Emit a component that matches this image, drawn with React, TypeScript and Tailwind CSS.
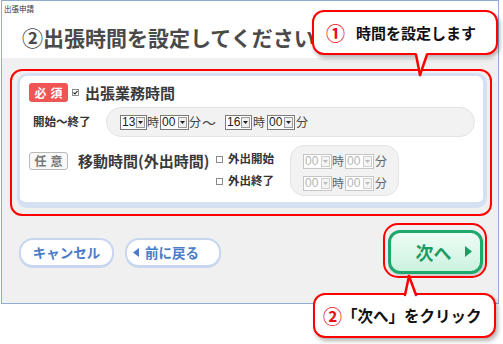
import React from "react";

function Arrow({ dim }: { dim?: boolean }) {
  return (
    <span
      className={`ml-auto mr-[1px] flex h-[11px] w-[9px] items-center justify-center border ${
        dim ? "border-[#cfcfcf] bg-[#f4f4f4]" : "border-[#9a9a9a] bg-[#eeeeee]"
      }`}
    >
      <svg width="5" height="3" viewBox="0 0 5 3">
        <polygon points="0,0 5,0 2.5,3" fill={dim ? "#bbbbbb" : "#222222"} />
      </svg>
    </span>
  );
}

function Sel({ v, cls, dim }: { v: string; cls: string; dim?: boolean }) {
  return (
    <span
      className={`flex h-[15px] items-center border bg-white ${cls} ${
        dim ? "border-[#c6c6c6] text-[#b4b4b4]" : "border-[#7a7a7a] text-[#222]"
      }`}
    >
      <span className="pl-[1px] text-[12px] leading-none font-['Liberation_Sans',sans-serif]">{v}</span>
      <Arrow dim={dim} />
    </span>
  );
}

function Check({ checked }: { checked?: boolean }) {
  return (
    <span className="flex h-[7px] w-[7px] items-center justify-center border border-[#8a8a8a] bg-white">
      {checked && (
        <svg width="5" height="5" viewBox="0 0 5 5">
          <polyline points="0.5,2.5 2,4 4.5,0.8" fill="none" stroke="#222" strokeWidth="1.1" />
        </svg>
      )}
    </span>
  );
}

export default function App() {
  return (
    <div className="relative h-[344px] w-[503px] overflow-hidden bg-white font-['Noto_Sans_CJK_JP',sans-serif]">
      <div className="ml-[1px] flex h-[304px] w-[498px] flex-col border border-[#8fadd0]">
        <div className="h-[17px] pl-[2px] pt-[4px] text-[7.5px] leading-none text-[#333]">出張申請</div>
        <div className="flex h-[40px] items-center whitespace-nowrap pb-[2px] pl-[20px] text-[21px] font-bold leading-none text-[#4a4a4a]">
          ②出張時間を設定してください
        </div>
        <div className="flex-1 bg-[#f0f0f0] pt-[11px]">
          {/* red annotation around panel */}
          <div className="ml-[8px] h-[147px] w-[482px] rounded-[12px] border-2 border-[#ff0000]">
            <div className="ml-[5px] mt-[2px] h-[135px] w-[470px] rounded-[10px] border-[3px] border-b-[6px] border-r-[4px] border-[#d5e0f2] bg-white pl-[9px] pt-[7px]">
              {/* row 1 */}
              <div className="flex h-[19px] items-center">
                <span className="flex h-[19px] w-[39px] items-center justify-center gap-[4px] rounded-[3px] bg-[#f05555] text-[12px] font-bold leading-none text-white">
                  <span>必</span>
                  <span>須</span>
                </span>
                <span className="ml-[4px]">
                  <Check checked />
                </span>
                <span className="ml-[6px] text-[15px] font-bold leading-none text-[#3a3a3a]">出張業務時間</span>
              </div>
              {/* row 2 */}
              <div className="mt-[5px] flex h-[30px] items-center">
                <span className="w-[77px] pl-[4px] text-[11.5px] font-bold leading-none text-[#333]">開始～終了</span>
                <div className="flex h-[30px] w-[369px] items-center rounded-[15px] border border-[#e4e4e4] bg-[#f2f2f2] pl-[13px] text-[12px] leading-none text-[#444]">
                  <Sel v="13" cls="w-[27px]" />
                  <span className="ml-[0px]">時</span>
                  <Sel v="00" cls="ml-[1px] w-[29px]" />
                  <span>分</span>
                  <span className="ml-[1px] text-[14px]">～</span>
                  <Sel v="16" cls="ml-[9px] w-[27px]" />
                  <span className="ml-[1px]">時</span>
                  <Sel v="00" cls="ml-[2px] w-[28px]" />
                  <span className="ml-[1px]">分</span>
                </div>
              </div>
              {/* row 3 */}
              <div className="mt-[8px] flex items-start">
                <div className="flex w-[187px] items-center pt-[7px]">
                  <span className="flex h-[18px] w-[39px] items-center justify-center gap-[4px] rounded-[3px] border border-[#b9b9b9] bg-[#f8f8f8] text-[12px] font-bold leading-none text-[#777]">
                    <span>任</span>
                    <span>意</span>
                  </span>
                  <span className="ml-[10px] text-[15px] font-bold leading-[18px] text-[#3a3a3a]">移動時間(外出時間)</span>
                </div>
                <div className="w-[74px] pt-[3px]">
                  <div className="flex h-[22px] items-center gap-[5px]">
                    <Check />
                    <span className="text-[11.5px] font-bold leading-none text-[#333]">外出開始</span>
                  </div>
                  <div className="flex h-[22px] items-center gap-[5px]">
                    <Check />
                    <span className="text-[11.5px] font-bold leading-none text-[#333]">外出終了</span>
                  </div>
                </div>
                <div className="flex h-[51px] w-[109px] flex-col gap-[2px] rounded-[14px] border border-[#e4e4e4] bg-[#f2f2f2] pl-[12px] pt-[5px] text-[12px] leading-none text-[#666]">
                  <div className="flex h-[20px] items-center">
                    <Sel v="00" cls="w-[29px]" dim />
                    <span>時</span>
                    <Sel v="00" cls="ml-[1px] w-[29px]" dim />
                    <span className="ml-[1px]">分</span>
                  </div>
                  <div className="flex h-[20px] items-center">
                    <Sel v="00" cls="w-[29px]" dim />
                    <span>時</span>
                    <Sel v="00" cls="ml-[1px] w-[29px]" dim />
                    <span className="ml-[1px]">分</span>
                  </div>
                </div>
              </div>
            </div>
          </div>
          {/* buttons */}
          <div className="mt-[7px] flex items-start justify-between pl-[17px] pr-[11px]">
            <div className="mt-[15px] flex gap-[11px]">
              <div className="flex h-[30px] w-[95px] items-center justify-center rounded-[14px] border-2 border-b-[3px] border-[#c8d7ef] bg-white text-[13.5px] font-bold leading-none text-[#4a7cc8]">
                キャンセル
              </div>
              <div className="flex h-[30px] w-[96px] items-center gap-[6px] rounded-[14px] border-2 border-b-[3px] border-[#c8d7ef] bg-white pl-[6px] text-[13.5px] font-bold leading-none text-[#4a7cc8]">
                <svg width="6" height="9" viewBox="0 0 6 9">
                  <polygon points="6,0 6,9 0,4.5" fill="#4a7cc8" />
                </svg>
                <span>前に戻る</span>
              </div>
            </div>
            <div className="flex h-[55px] w-[104px] items-center justify-center rounded-[15px] border-2 border-[#ff0000] pt-[2px]">
              <div className="flex h-[44px] w-[95px] items-center justify-end gap-[13px] rounded-[12px] border-[3px] border-[#1ea86c] bg-gradient-to-b from-[#eefcf5] to-[#cbf2df] pr-[8px] shadow-[1px_2px_2px_rgba(0,0,0,0.15)]">
                <span className="text-[18px] font-bold leading-none text-[#1b9c62]">次へ</span>
                <svg width="7" height="11" viewBox="0 0 7 11">
                  <polygon points="0,0 7,5.5 0,11" fill="#1b9c62" />
                </svg>
              </div>
            </div>
          </div>
        </div>
      </div>

      {/* callout 1 */}
      <div className="absolute left-[312px] top-[10px] flex h-[45px] w-[186px] items-center rounded-[12px] border-[2.5px] border-[#ff0000] bg-white pl-[12px] shadow-[2px_3px_4px_rgba(0,0,0,0.3)]">
        <span className="text-[19px] font-bold leading-none text-[#e8101a]">①</span>
        <span className="ml-[11px] text-[15px] font-bold leading-none text-[#111]">時間を設定します</span>
      </div>
      <svg className="absolute left-[410px] top-[51px]" width="22" height="26" viewBox="0 0 22 26">
        <polygon points="6,0 17,0 17,4 10,24 6,4" fill="#ffffff" />
        <line x1="6" y1="3.5" x2="10" y2="24" stroke="#ff0000" strokeWidth="2.5" strokeLinecap="round" />
        <line x1="17" y1="3.5" x2="10" y2="24" stroke="#ff0000" strokeWidth="2.5" strokeLinecap="round" />
      </svg>

      {/* callout 2 */}
      <div className="absolute left-[313px] top-[293px] flex h-[45px] w-[183px] items-center rounded-[12px] border-[2.5px] border-[#ff0000] bg-white pl-[8px] shadow-[2px_3px_4px_rgba(0,0,0,0.3)]">
        <span className="text-[19px] font-bold leading-none text-[#e8101a]">②</span>
        <span className="ml-[0px] text-[15.5px] font-bold leading-none text-[#111]">「次へ」をクリック</span>
      </div>
      <svg className="absolute left-[400px] top-[274px]" width="22" height="24" viewBox="0 0 22 24">
        <polygon points="9,2 16,21 16,23 5,23 5,21" fill="#ffffff" />
        <line x1="5" y1="21" x2="9" y2="2" stroke="#ff0000" strokeWidth="2.5" strokeLinecap="round" />
        <line x1="16" y1="21" x2="9" y2="2" stroke="#ff0000" strokeWidth="2.5" strokeLinecap="round" />
      </svg>
    </div>
  );
}
